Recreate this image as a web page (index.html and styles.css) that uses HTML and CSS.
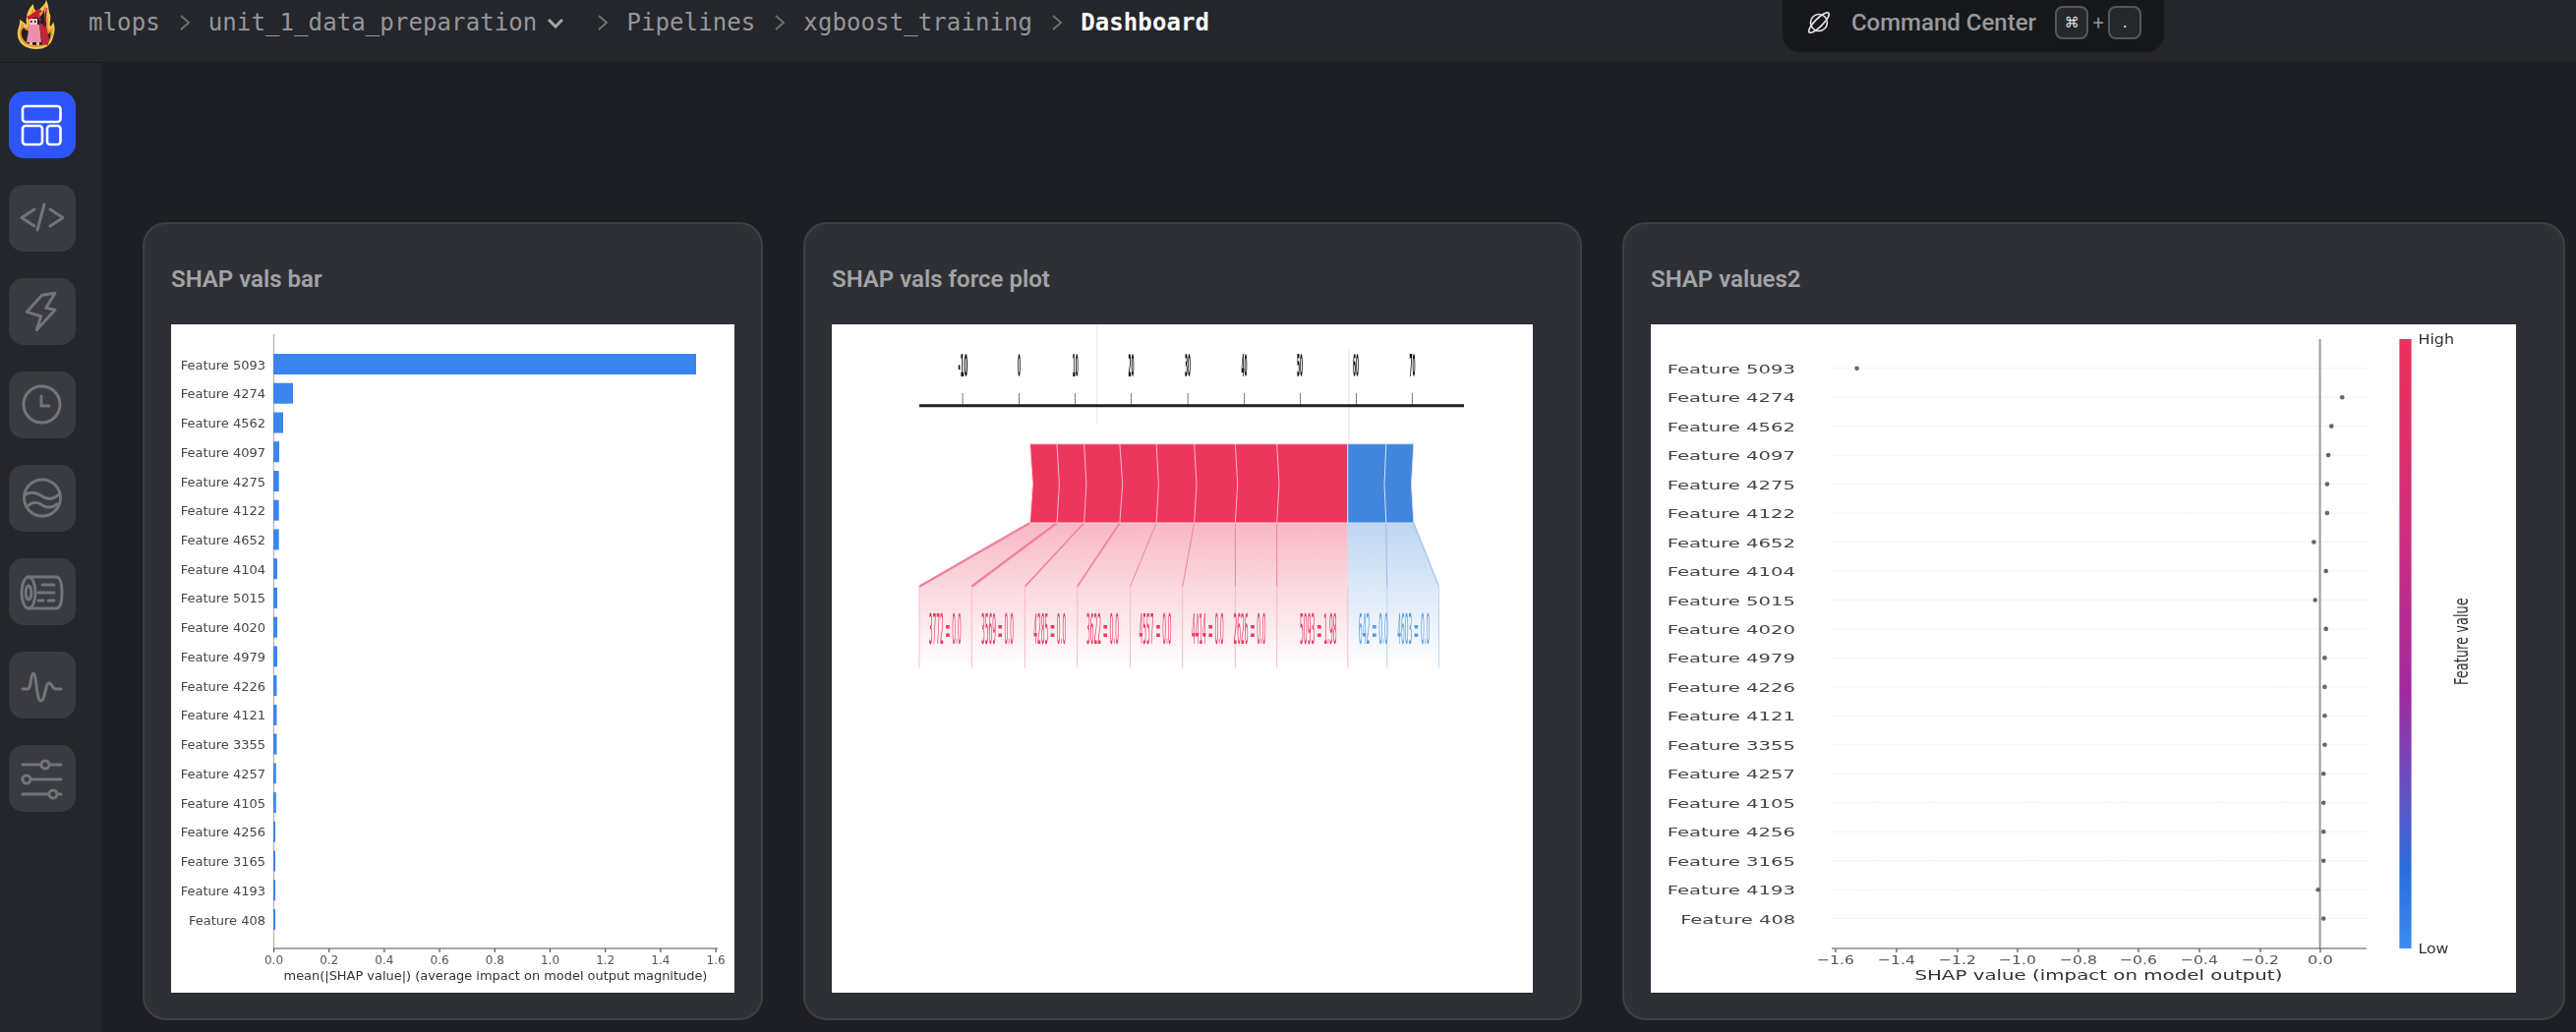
FILE: index.html
```html
<!DOCTYPE html>
<html>
<head>
<meta charset="utf-8">
<title>Dashboard</title>
<link rel="stylesheet" href="styles.css">
</head>
<body>
<header class="topbar">
  <svg class="logo" width="70" height="64" viewBox="0 0 70 64">
    <path fill="#f6c94c" d="M37 50C27 50 19 45 18 36C17 29 21 26 20 20C24 22 25 24 27 25C26 17 28 9 34 4C34 9 36 11 38 12C41 8 46 5 47 0C50 6 49 11 51 15C52 20 50 24 51 27C53 25 54 24 54 22C57 28 55 34 54 38C52 46 46 50 37 50Z"/>
    <path fill="#e8962e" d="M37 48C28 48 21 43 20 36C19 31 22 28 22 24C25 26 27 28 29 28C28 22 30 14 34 9C35 13 37 15 39 15C42 12 45 9 46 5C47 11 47 16 49 19C49 24 48 28 50 31C52 29 53 28 53 27C54 33 53 37 52 39C50 45 44 48 37 48Z"/>
    <path fill="#1f2025" d="M37 46C29 46 23 42 22 36C21 32 23 30 24 28C26 31 29 32 31 31C30 25 31 18 34 13C35 16 37 18 40 18C42 16 44 13 45 10C45 16 46 20 47 23C47 28 47 32 49 35C50 34 51 33 51 32C52 36 51 39 50 41C48 45 43 46 37 46Z"/>
    <path fill="#c2263a" d="M40 23L47 27L50 40L49 46L43 45L41 32Z"/>
    <path fill="#ee8fa8" d="M30 25H40L42 43H27Z"/>
    <path fill="#f2c8c8" d="M30 19H38V25H30Z"/>
    <path fill="#c9202f" d="M27 17L33 14L39 9L43 11L40 14L42 22L37 17L29 20Z"/>
    <rect x="31" y="21" width="1.5" height="2" fill="#222"/>
    <rect x="35" y="21" width="1.5" height="2" fill="#222"/>
    <rect x="24" y="25" width="3" height="3" fill="#e8b9b0"/>
    <rect x="30" y="43" width="3" height="3" fill="#d9c7a8"/>
    <rect x="37" y="43" width="3" height="3" fill="#d9c7a8"/>
    <path stroke="#7a1c2c" stroke-width="1.5" d="M47 10L45 28"/>
    <rect x="45.5" y="8" width="3" height="4" fill="#e85c70"/>
  </svg>
  <nav class="crumbs">
    <span class="crumb">mlops</span>
    <svg class="sep" width="12" height="20" viewBox="0 0 12 20"><path d="M2 3L10 10L2 17"/></svg>
    <span class="crumb">unit_1_data_preparation</span>
    <svg class="caret" width="18" height="12" viewBox="0 0 18 12"><path d="M2 3L9 10L16 3"/></svg>
    <svg class="sep sep-far" width="12" height="20" viewBox="0 0 12 20"><path d="M2 3L10 10L2 17"/></svg>
    <span class="crumb">Pipelines</span>
    <svg class="sep" width="12" height="20" viewBox="0 0 12 20"><path d="M2 3L10 10L2 17"/></svg>
    <span class="crumb">xgboost_training</span>
    <svg class="sep" width="12" height="20" viewBox="0 0 12 20"><path d="M2 3L10 10L2 17"/></svg>
    <span class="crumb crumb-current">Dashboard</span>
  </nav>
  <div class="command">
    <svg width="28" height="26" viewBox="0 0 28 26" class="planet">
      <circle cx="14" cy="13" r="8.5"/>
      <ellipse cx="14" cy="13" rx="14" ry="4" transform="rotate(-45 14 13)"/>
    </svg>
    <span class="command-label">Command Center</span>
    <span class="key">⌘</span>
    <span class="plus">+</span>
    <span class="key">.</span>
  </div>
</header>

<div class="layout">
  <aside class="sidebar">
    <a class="navbtn navbtn-active">
      <svg width="68" height="68" viewBox="0 0 68 68">
        <rect x="14" y="15" width="38.5" height="16" rx="3"/>
        <rect x="14" y="35" width="20" height="19" rx="3"/>
        <rect x="39" y="35" width="13.5" height="19" rx="3"/>
      </svg>
    </a>
    <a class="navbtn">
      <svg width="68" height="68" viewBox="0 0 68 68">
        <path d="M26 25L13 33.5L26 42"/><path d="M36 20L29 46"/><path d="M42 25L55 33.5L42 42"/>
      </svg>
    </a>
    <a class="navbtn">
      <svg width="68" height="68" viewBox="0 0 68 68">
        <path d="M33.7 17.3L47 15.2L37.7 30.2L47 32.3L28.3 52.8L32.7 38.7L18.3 34.4Z"/>
      </svg>
    </a>
    <a class="navbtn">
      <svg width="68" height="68" viewBox="0 0 68 68">
        <circle cx="33.5" cy="33.5" r="18.5"/><path d="M33 25V35H41"/>
      </svg>
    </a>
    <a class="navbtn">
      <svg width="68" height="68" viewBox="0 0 68 68">
        <circle cx="34" cy="33.5" r="18.5"/>
        <path d="M16 31C22 26 28 28 34 32C40 36 46 35 52 29"/>
        <path d="M19 42C24 37 30 38 34 41C39 44 44 44 49 40"/>
      </svg>
    </a>
    <a class="navbtn">
      <svg width="68" height="68" viewBox="0 0 68 68">
        <ellipse cx="20" cy="35" rx="7" ry="16"/><ellipse cx="20" cy="35" rx="2.8" ry="7"/>
        <path d="M20 19H48C52 19 54 23 54 35C54 47 52 51 48 51H20"/>
        <path d="M34 27H46M30 35H46M30 43H35M40 43H46"/>
      </svg>
    </a>
    <a class="navbtn">
      <svg width="68" height="68" viewBox="0 0 68 68">
        <path d="M14 38H19C23 38 22 22 25 22C28 22 28 50 32.5 50C37 50 37 32 41 32C44 32 44 38 48 38H53"/>
      </svg>
    </a>
    <a class="navbtn">
      <svg width="68" height="68" viewBox="0 0 68 68">
        <path d="M14 20H53M14 35H53M14 50H53"/>
        <circle class="knob" cx="37" cy="20" r="4"/><circle class="knob" cx="18" cy="35" r="4"/><circle class="knob" cx="45" cy="50" r="4"/>
      </svg>
    </a>
  </aside>

  <main class="cards">
    <section class="card">
      <h2 class="card-title">SHAP vals bar</h2>
      <svg class="plot" width="573" height="680" viewBox="0 0 573 680">
        <path class="axis-light" d="M104.5 10V635"/>
        <g class="bars">
          <rect x="104" y="30" width="430" height="21"/>
          <rect x="104" y="59.7" width="20" height="21"/>
          <rect x="104" y="89.5" width="10" height="21"/>
          <rect x="104" y="119.2" width="6" height="21"/>
          <rect x="104" y="149" width="5.7" height="21"/>
          <rect x="104" y="178.7" width="5.7" height="21"/>
          <rect x="104" y="208.4" width="5.7" height="21"/>
          <rect x="104" y="238.2" width="4" height="21"/>
          <rect x="104" y="267.9" width="4" height="21"/>
          <rect x="104" y="297.7" width="4" height="21"/>
          <rect x="104" y="327.4" width="4" height="21"/>
          <rect x="104" y="357.1" width="3.5" height="21"/>
          <rect x="104" y="386.9" width="3.5" height="21"/>
          <rect x="104" y="416.6" width="3.5" height="21"/>
          <rect x="104" y="446.4" width="2.8" height="21"/>
          <rect x="104" y="476.1" width="2.8" height="21"/>
          <rect x="104" y="505.8" width="2" height="21"/>
          <rect x="104" y="535.6" width="2" height="21"/>
          <rect x="104" y="565.3" width="2" height="21"/>
          <rect x="104" y="595" width="2" height="21"/>
        </g>
        <g class="feature feature-end">
          <text x="96" y="45.5">Feature 5093</text>
          <text x="96" y="75.2">Feature 4274</text>
          <text x="96" y="105">Feature 4562</text>
          <text x="96" y="134.7">Feature 4097</text>
          <text x="96" y="164.5">Feature 4275</text>
          <text x="96" y="194.2">Feature 4122</text>
          <text x="96" y="223.9">Feature 4652</text>
          <text x="96" y="253.7">Feature 4104</text>
          <text x="96" y="283.4">Feature 5015</text>
          <text x="96" y="313.2">Feature 4020</text>
          <text x="96" y="342.9">Feature 4979</text>
          <text x="96" y="372.6">Feature 4226</text>
          <text x="96" y="402.4">Feature 4121</text>
          <text x="96" y="432.1">Feature 3355</text>
          <text x="96" y="461.9">Feature 4257</text>
          <text x="96" y="491.6">Feature 4105</text>
          <text x="96" y="521.3">Feature 4256</text>
          <text x="96" y="551.1">Feature 3165</text>
          <text x="96" y="580.8">Feature 4193</text>
          <text x="96" y="610.5">Feature 408</text>
        </g>
        <path class="axis" d="M104 635H556M104.5 635V639M160.7 635V639M216.9 635V639M273.1 635V639M329.3 635V639M385.5 635V639M441.7 635V639M497.9 635V639M554.1 635V639"/>
        <g class="tick">
          <text x="104.5" y="651">0.0</text>
          <text x="160.7" y="651">0.2</text>
          <text x="216.9" y="651">0.4</text>
          <text x="273.1" y="651">0.6</text>
          <text x="329.3" y="651">0.8</text>
          <text x="385.5" y="651">1.0</text>
          <text x="441.7" y="651">1.2</text>
          <text x="497.9" y="651">1.4</text>
          <text x="554.1" y="651">1.6</text>
        </g>
        <text class="xlabel xlabel-bar" x="330" y="667">mean(|SHAP value|) (average impact on model output magnitude)</text>
      </svg>
    </section>

    <section class="card">
      <h2 class="card-title">SHAP vals force plot</h2>
      <svg class="plot" width="713" height="680" viewBox="0 0 713 680">
        <defs>
          <linearGradient id="fadeRed" gradientUnits="userSpaceOnUse" x1="0" y1="202" x2="0" y2="349">
            <stop offset="0" stop-color="#ec3a5d" stop-opacity=".36"/>
            <stop offset="1" stop-color="#ec3a5d" stop-opacity="0"/>
          </linearGradient>
          <linearGradient id="fadeBlue" gradientUnits="userSpaceOnUse" x1="0" y1="202" x2="0" y2="349">
            <stop offset="0" stop-color="#4285d9" stop-opacity=".34"/>
            <stop offset="1" stop-color="#4285d9" stop-opacity="0"/>
          </linearGradient>
        </defs>
        <path class="faint" d="M269.5 0V102M525.7 25V122"/>
        <path class="force-ticks" d="M133.1 70V83M190.5 70V83M247.4 70V83M304.4 70V83M362.2 70V83M419.6 70V83M476.6 70V83M533.5 70V83M590.4 70V83"/>
        <path class="force-axis" d="M89 82.7H643"/>
        <g class="force-tick">
          <text transform="translate(128.5 52.7) scale(.17 1)">-10</text>
          <text transform="translate(189 52.7) scale(.135 1)">0</text>
          <text transform="translate(244.7 52.7) scale(.135 1)">10</text>
          <text transform="translate(301.6 52.7) scale(.135 1)">20</text>
          <text transform="translate(359 52.7) scale(.135 1)">30</text>
          <text transform="translate(416.4 52.7) scale(.135 1)">40</text>
          <text transform="translate(473 52.7) scale(.135 1)">50</text>
          <text transform="translate(530 52.7) scale(.135 1)">60</text>
          <text transform="translate(587.6 52.7) scale(.135 1)">70</text>
        </g>

        <path fill="url(#fadeRed)" d="M201.5 202L89 266.7V349.3H524.8V202Z"/>
        <path fill="url(#fadeBlue)" d="M524.8 202H591.8L617.5 266.7V349.3H524.8Z"/>
        <path class="link-red link-wide" d="M201.5 202L89 266.7M229 202L142.3 266.7"/>
        <path class="link-red link-mid" d="M256.6 202L196.5 266.7M292.9 202L249.7 266.7"/>
        <path class="link-red" d="M330.1 202L303.5 266.7M368.7 202L356.7 266.7M410.4 202V266.7M452.7 202V266.7"/>
        <path class="link-blue" d="M563.8 202L564.7 266.7M591.8 202L617.5 266.7"/>
        <path class="drop-red" d="M89 266.7V349.3M142.3 266.7V349.3M196.5 266.7V349.3M249.7 266.7V349.3M303.5 266.7V349.3M356.7 266.7V349.3M410.4 266.7V349.3M452.7 266.7V349.3M524.8 266.7V349.3"/>
        <path class="drop-blue" d="M564.7 266.7V349.3M617.5 266.7V349.3"/>

        <path fill="#ec365c" stroke="#f9d3dc" stroke-width="1" d="M201.5 121.7H524.8V202H201.5L204.3 162.7Z"/>
        <path fill="#4285dd" stroke="#cfe0f6" stroke-width="1" d="M524.8 121.7H591.8L589.5 162.7L591.8 202H524.8Z"/>
        <path class="seam-red" d="M229 121.7L231.4 162.7L229 202M256.6 121.7L258.9 162.7L256.6 202M292.9 121.7L295.7 162.7L292.9 202M330.1 121.7L332.4 162.7L330.1 202M368.7 121.7L371 162.7L368.7 202M410.4 121.7L412.7 162.7L410.4 202M452.7 121.7L455 162.7L452.7 202"/>
        <path class="seam-blue" d="M563.8 121.7L562 162.7L563.8 202"/>

        <g class="force-label">
          <text transform="translate(98.7 325) scale(.14 1)">3772 = 0.0</text>
          <text transform="translate(152 325) scale(.14 1)">3569 = 0.0</text>
          <text transform="translate(205.2 325) scale(.14 1)">4285 = 0.0</text>
          <text transform="translate(259 325) scale(.14 1)">3622 = 0.0</text>
          <text transform="translate(312.6 325) scale(.14 1)">4557 = 0.0</text>
          <text transform="translate(365.9 325) scale(.14 1)">4414 = 0.0</text>
          <text transform="translate(408.6 325) scale(.14 1)">2626 = 0.0</text>
          <text transform="translate(476 325) scale(.1435 1)">5093 = 1.98</text>
          <text class="force-label-blue" transform="translate(535.8 325) scale(.1435 1)">642 = 0.0</text>
          <text class="force-label-blue" transform="translate(575.3 325) scale(.14 1)">4603 = 0.0</text>
        </g>
      </svg>
    </section>

    <section class="card">
      <h2 class="card-title">SHAP values2</h2>
      <svg class="plot" width="880" height="680" viewBox="0 0 880 680">
        <defs>
          <linearGradient id="valueScale" x1="0" y1="0" x2="0" y2="1">
            <stop offset="0" stop-color="#ec3159"/>
            <stop offset=".3" stop-color="#d12e7c"/>
            <stop offset=".58" stop-color="#a12a9f"/>
            <stop offset=".76" stop-color="#5f55c6"/>
            <stop offset=".87" stop-color="#2a6ddd"/>
            <stop offset="1" stop-color="#3a8cef"/>
          </linearGradient>
        </defs>
        <path class="dotted" d="M184 44.7H728M184 74.2H728M184 103.6H728M184 133.1H728M184 162.6H728M184 192H728M184 221.5H728M184 251H728M184 280.5H728M184 309.9H728M184 339.4H728M184 368.9H728M184 398.3H728M184 427.8H728M184 457.3H728M184 486.7H728M184 516.2H728M184 545.7H728M184 575.2H728M184 604.6H728"/>
        <path class="zero" d="M680.6 15V635"/>
        <g class="dots">
          <circle cx="209.6" cy="44.7" r="2.3"/>
          <circle cx="703.2" cy="74.2" r="2.3"/>
          <circle cx="692.2" cy="103.6" r="2.3"/>
          <circle cx="689.1" cy="133.1" r="2.3"/>
          <circle cx="687.9" cy="162.6" r="2.3"/>
          <circle cx="687.9" cy="192" r="2.3"/>
          <circle cx="674.4" cy="221.5" r="2.3"/>
          <circle cx="686.7" cy="251" r="2.3"/>
          <circle cx="675.7" cy="280.5" r="2.3"/>
          <circle cx="686.7" cy="309.9" r="2.3"/>
          <circle cx="685.4" cy="339.4" r="2.3"/>
          <circle cx="685.4" cy="368.9" r="2.3"/>
          <circle cx="685.4" cy="398.3" r="2.3"/>
          <circle cx="685.4" cy="427.8" r="2.3"/>
          <circle cx="684.2" cy="457.3" r="2.3"/>
          <circle cx="684.2" cy="486.7" r="2.3"/>
          <circle cx="684.2" cy="516.2" r="2.3"/>
          <circle cx="684.2" cy="545.7" r="2.3"/>
          <circle cx="678.7" cy="575.2" r="2.3"/>
          <circle cx="684.2" cy="604.6" r="2.3"/>
        </g>
        <g class="feature">
          <text x="16.7" y="49.7" textLength="130.4" lengthAdjust="spacingAndGlyphs">Feature 5093</text>
          <text x="16.7" y="79.2" textLength="130.4" lengthAdjust="spacingAndGlyphs">Feature 4274</text>
          <text x="16.7" y="108.6" textLength="130.4" lengthAdjust="spacingAndGlyphs">Feature 4562</text>
          <text x="16.7" y="138.1" textLength="130.4" lengthAdjust="spacingAndGlyphs">Feature 4097</text>
          <text x="16.7" y="167.6" textLength="130.4" lengthAdjust="spacingAndGlyphs">Feature 4275</text>
          <text x="16.7" y="197" textLength="130.4" lengthAdjust="spacingAndGlyphs">Feature 4122</text>
          <text x="16.7" y="226.5" textLength="130.4" lengthAdjust="spacingAndGlyphs">Feature 4652</text>
          <text x="16.7" y="256" textLength="130.4" lengthAdjust="spacingAndGlyphs">Feature 4104</text>
          <text x="16.7" y="285.5" textLength="130.4" lengthAdjust="spacingAndGlyphs">Feature 5015</text>
          <text x="16.7" y="314.9" textLength="130.4" lengthAdjust="spacingAndGlyphs">Feature 4020</text>
          <text x="16.7" y="344.4" textLength="130.4" lengthAdjust="spacingAndGlyphs">Feature 4979</text>
          <text x="16.7" y="373.9" textLength="130.4" lengthAdjust="spacingAndGlyphs">Feature 4226</text>
          <text x="16.7" y="403.3" textLength="130.4" lengthAdjust="spacingAndGlyphs">Feature 4121</text>
          <text x="16.7" y="432.8" textLength="130.4" lengthAdjust="spacingAndGlyphs">Feature 3355</text>
          <text x="16.7" y="462.3" textLength="130.4" lengthAdjust="spacingAndGlyphs">Feature 4257</text>
          <text x="16.7" y="491.7" textLength="130.4" lengthAdjust="spacingAndGlyphs">Feature 4105</text>
          <text x="16.7" y="521.2" textLength="130.4" lengthAdjust="spacingAndGlyphs">Feature 4256</text>
          <text x="16.7" y="550.7" textLength="130.4" lengthAdjust="spacingAndGlyphs">Feature 3165</text>
          <text x="16.7" y="580.2" textLength="130.4" lengthAdjust="spacingAndGlyphs">Feature 4193</text>
          <text x="30.2" y="609.6" textLength="117" lengthAdjust="spacingAndGlyphs">Feature 408</text>
        </g>
        <path class="axis" d="M184 635H728M188 635V639M250 635V639M312 635V639M373 635V639M435 635V639M496 635V639M558 635V639M620 635V639M681 635V639"/>
        <g class="tick">
          <text x="169" y="651" textLength="38" lengthAdjust="spacingAndGlyphs">−1.6</text>
          <text x="231" y="651" textLength="38" lengthAdjust="spacingAndGlyphs">−1.4</text>
          <text x="293" y="651" textLength="38" lengthAdjust="spacingAndGlyphs">−1.2</text>
          <text x="354" y="651" textLength="38" lengthAdjust="spacingAndGlyphs">−1.0</text>
          <text x="416" y="651" textLength="38" lengthAdjust="spacingAndGlyphs">−0.8</text>
          <text x="477" y="651" textLength="38" lengthAdjust="spacingAndGlyphs">−0.6</text>
          <text x="539" y="651" textLength="38" lengthAdjust="spacingAndGlyphs">−0.4</text>
          <text x="601" y="651" textLength="38" lengthAdjust="spacingAndGlyphs">−0.2</text>
          <text x="668" y="651" textLength="26" lengthAdjust="spacingAndGlyphs">0.0</text>
        </g>
        <text class="xlabel" x="268.4" y="667" textLength="374" lengthAdjust="spacingAndGlyphs">SHAP value (impact on model output)</text>
        <rect x="761.4" y="15" width="12.2" height="620" fill="url(#valueScale)"/>
        <text class="scale-label" x="780.4" y="19.5" textLength="36.7" lengthAdjust="spacingAndGlyphs">High</text>
        <text class="scale-label" x="780.4" y="640" textLength="31" lengthAdjust="spacingAndGlyphs">Low</text>
        <text class="scale-title" transform="translate(831 367) rotate(-90) scale(.65 1)">Feature value</text>
      </svg>
    </section>
  </main>
</div>
</body>
</html>
```

FILE: styles.css
```css
* { box-sizing: border-box; }

html, body { height: 100%; }

body {
  margin: 0;
  overflow: hidden;
  background: #1e1f24;
  font-family: Roboto, "Liberation Sans", sans-serif;
}

/* top bar */
.topbar {
  display: flex;
  height: 64px;
  background: #24262b;
  border-bottom: 1px solid #1b1c20;
}

.logo { flex: none; }

.crumbs {
  display: flex;
  align-items: center;
  height: 46px;
  margin-left: 20px;
  width: 1723px;
  font: 24px "DejaVu Sans Mono", monospace;
  letter-spacing: .1px;
}

.crumb { color: #95969a; }
.crumb-current { color: #fff; font-weight: 700; }

.sep { margin: 0 18px 0 19px; fill: none; stroke: #6e7075; stroke-width: 2; }
.sep-far { margin-left: 33px; }
.caret { margin-left: 10px; fill: none; stroke: #a4a5a8; stroke-width: 3; }

.command {
  display: flex;
  align-items: center;
  width: 388px;
  height: 53px;
  padding: 0 23px 7px;
  background: #17181c;
  border-radius: 0 0 18px 18px;
}

.planet { margin-right: 19px; fill: none; stroke: #e8e8ea; stroke-width: 1.6; }

.command-label {
  width: 208px;
  color: #98999c;
  font-size: 24px;
  font-weight: 500;
  white-space: nowrap;
}

.key {
  display: flex;
  align-items: center;
  justify-content: center;
  width: 34px;
  height: 34px;
  background: #26272b;
  border: 2px solid #55575c;
  border-radius: 8px;
  color: #e4e4e6;
  font: 15px "DejaVu Sans", sans-serif;
}

.plus { width: 20px; color: #8b8c90; font-size: 20px; text-align: center; }

/* page under the bar */
.layout { display: flex; height: 986px; }

.sidebar {
  display: flex;
  flex: none;
  flex-direction: column;
  gap: 27px;
  width: 104px;
  padding: 29px 0 0 9px;
  background: #24262b;
}

.navbtn {
  display: block;
  width: 68px;
  height: 68px;
  background: #3a3b40;
  border-radius: 15px;
}

.navbtn svg { display: block; fill: none; stroke: #72747a; stroke-width: 3; stroke-linecap: round; stroke-linejoin: round; }
.navbtn .knob { fill: #3a3b40; }

.navbtn-active { background: #2d55fb; }
.navbtn-active svg { stroke: #fff; stroke-width: 2.6; }

.cards {
  display: grid;
  grid-template-columns: 631px 792px 959px;
  column-gap: 41px;
  align-items: start;
  padding: 162px 0 0 41px;
}

.card {
  height: 812px;
  padding: 0 27px;
  background: #2f3035;
  border: 2px solid #3e4046;
  border-radius: 24px;
}

.card-title {
  margin: 40px 0 30px;
  color: #a2a3a6;
  font-size: 24px;
  font-weight: 600;
  line-height: 32px;
}

/* charts */
.plot {
  display: block;
  background: #fff;
  filter: blur(.35px);
  font-family: "DejaVu Sans", sans-serif;
}

.bars rect { fill: #3b86ee; }

.feature text { fill: #454545; font-size: 13px; }
.feature-end text { text-anchor: end; }

.tick text { fill: #555; font-size: 12px; text-anchor: middle; }
.plot .tick text[textLength] { text-anchor: start; font-size: 13px; }
.xlabel { fill: #333; font-size: 14px; }
.xlabel-bar { font-size: 12.95px; text-anchor: middle; }

.axis { fill: none; stroke: #555; stroke-width: 1.2; }
.axis-light { stroke: #bbb; stroke-width: 1.4; }

.faint { stroke: #eee; stroke-width: 1.4; }
.force-axis { stroke: #222; stroke-width: 3; }
.force-ticks { stroke: #777; stroke-width: 1; }
.force-tick text { fill: #111; font-size: 32px; font-weight: 700; }

.link-red { fill: none; stroke: #f0839f; stroke-width: 1; }
.link-wide { stroke-width: 2.4; }
.link-mid { stroke-width: 1.6; }
.link-blue { fill: none; stroke: #9cc3ee; stroke-width: 1.2; }
.drop-red { stroke: #f7bccb; stroke-width: 1; }
.drop-blue { stroke: #bcd6f2; stroke-width: 1; }
.seam-red { fill: none; stroke: #fbb6c6; stroke-width: 1; }
.seam-blue { fill: none; stroke: #cfe0f6; stroke-width: 1; }

.force-label text { fill: #ea3a62; font-size: 42px; }
.force-label .force-label-blue { fill: #5a9be3; }

.dotted { fill: none; stroke: #e6e6e6; stroke-width: 1; stroke-dasharray: 1.4 1.4; }
.zero { stroke: #999; stroke-width: 2; }
.dots circle { fill: #666; }
.scale-label { fill: #333; font-size: 14px; }
.scale-title { fill: #333; font-size: 20px; }
```
